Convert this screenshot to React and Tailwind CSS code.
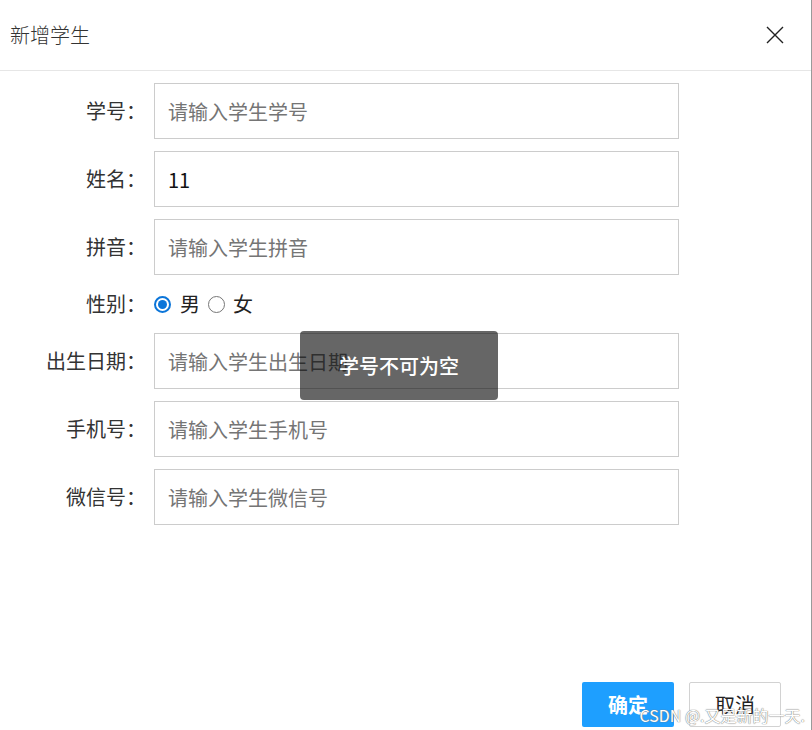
import React from 'react';

const fields = [
  { label: '学号：', placeholder: '请输入学生学号' },
  { label: '姓名：', value: '11' },
  { label: '拼音：', placeholder: '请输入学生拼音' },
];

const fields2 = [
  { label: '出生日期：', placeholder: '请输入学生出生日期' },
  { label: '手机号：', placeholder: '请输入学生手机号' },
  { label: '微信号：', placeholder: '请输入学生微信号' },
];

const Row = ({ label, children, h = 'h-[56px]' }) => (
  <div className={`flex items-center ${h}`}>
    <div className="w-[154px] shrink-0 text-right text-[20px] text-[#333] pr-[8px] leading-none">{label}</div>
    {children}
  </div>
);

const Field = ({ f }) => (
  <Row label={f.label}>
    <input
      readOnly
      defaultValue={f.value || ''}
      placeholder={f.placeholder}
      className="w-[525px] h-[56px] border border-[#cccccc] bg-white px-[13px] text-[20px] text-[#111] placeholder:text-[#757575] outline-none"
    />
  </Row>
);

export default function App() {
  return (
    <div className="relative min-h-[730px] w-[812px] bg-white border-r border-[#9a9a9a] flex flex-col font-['Noto_Sans_CJK_SC','Noto_Sans',sans-serif] overflow-hidden">
      {/* 标题栏 */}
      <div className="h-[71px] shrink-0 border-b border-[#e6e6e6] flex items-center justify-between pl-[10px] pr-[27px]">
        <span className="text-[20px] text-[#333] font-light">新增学生</span>
        <svg width="18" height="18" viewBox="0 0 18 18" className="text-[#222]">
          <path d="M1 1L17 17M17 1L1 17" stroke="currentColor" strokeWidth="1.4" fill="none" />
        </svg>
      </div>

      {/* 表单 */}
      <div className="flex flex-col gap-[12px] pt-[12px]">
        {fields.map((f) => <Field key={f.label} f={f} />)}
        <Row label="性别：" h="h-[34px]">
          <div className="flex items-center text-[20px] text-[#222] leading-none">
            <span className="w-[17px] h-[17px] rounded-full border-2 border-[#0b75d9] flex items-center justify-center">
              <span className="w-[9px] h-[9px] rounded-full bg-[#0b75d9]" />
            </span>
            <span className="ml-[9px]">男</span>
            <span className="ml-[8px] w-[17px] h-[17px] rounded-full border border-[#767676]" />
            <span className="ml-[8px]">女</span>
          </div>
        </Row>
        {fields2.map((f) => <Field key={f.label} f={f} />)}
      </div>

      {/* 提示 */}
      <div className="absolute left-[300px] top-[331px] w-[198px] h-[69px] rounded-[4px] bg-black/60 flex items-center justify-center text-white text-[20px] font-medium">
        学号不可为空
      </div>

      {/* 按钮 */}
      <div className="mt-auto flex justify-end gap-[15px] pr-[30px] pb-[3px]">
        <button className="w-[92px] h-[45px] rounded-[2px] bg-[#1e9fff] text-white text-[20px] font-bold">确定</button>
        <button className="w-[92px] h-[45px] rounded-[2px] bg-white border border-[#d2d2d2] text-[#222] text-[20px]">取消</button>
      </div>

      <div className="absolute right-[6px] bottom-[7px] text-[16px] text-white leading-none [text-shadow:0_0_1px_#777,0_0_1px_#777]">
        CSDN @.又是新的一天.
      </div>
    </div>
  );
}
